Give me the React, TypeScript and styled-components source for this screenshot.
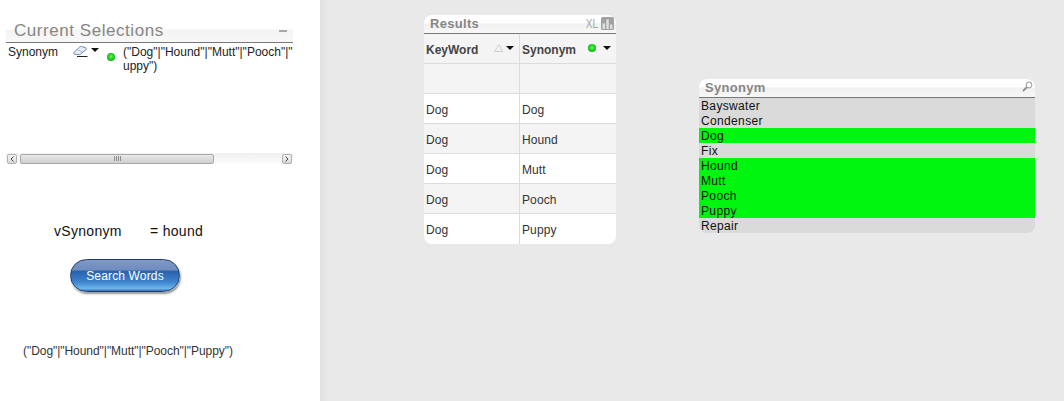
import { Fragment } from 'react';
import styled, { createGlobalStyle } from 'styled-components';

const GlobalStyle = createGlobalStyle`
  html, body {
    margin: 0;
    padding: 0;
    background: #e9e9e9;
  }
  * {
    box-sizing: border-box;
  }
`;

const Page = styled.div`
  display: flex;
  width: 1064px;
  height: 401px;
  overflow: hidden;
  font-family: "Liberation Sans", Arial, sans-serif;
  font-size: 12px;
  color: #222;
`;

const Sidebar = styled.aside`
  width: 320px;
  height: 100%;
  flex: none;
  background: #fff;
  padding: 21px 27px 0 6px;
`;

const Canvas = styled.main`
  flex: 1;
  height: 100%;
  position: relative;
  background: linear-gradient(90deg, #e0e0e0 0, #e9e9e9 10px);
`;

/* --- caption shared by every sheet object --- */
const Caption = styled.div<{ $height: number; $radius?: number }>`
  height: ${(p) => p.$height}px;
  display: flex;
  align-items: flex-end;
  justify-content: space-between;
  border-bottom: 1px solid #787878;
  background: linear-gradient(#fff 0, #fff 42%, #f1f1f1 50%, #f7f7f7 100%);
  border-radius: ${(p) => p.$radius ?? 0}px ${(p) => p.$radius ?? 0}px 0 0;
`;

const CaptionTitle = styled.span<{ $size: number; $left: number; $spacing: number }>`
  font-size: ${(p) => p.$size}px;
  line-height: ${(p) => p.$size + 3}px;
  color: #868686;
  margin: 0 0 1px ${(p) => p.$left}px;
  letter-spacing: ${(p) => p.$spacing}px;
  font-weight: ${(p) => (p.$size < 15 ? 700 : 400)};
`;

/* --- current selections --- */
const SelectionsBox = styled.section`
  width: 287px;
`;

const SelectionsCaption = styled(Caption)`
  background: linear-gradient(#fff 0, #fff 40%, #f3f3f3 41%, #f8f8f8 100%);
  padding-right: 6px;
  align-items: flex-start;
`;

const Minimize = styled.span`
  width: 8px;
  height: 2px;
  margin-top: 9px;
  background: #a8a8a8;
`;

const SelectionRow = styled.div`
  display: flex;
  height: 110px;
  padding: 2px 0 0 2px;
  line-height: 14px;
  color: #222;
`;

const FieldName = styled.span`
  width: 65px;
  flex: none;
`;

const EraserCell = styled.span`
  width: 34px;
  flex: none;
  display: flex;
  gap: 3px;
  align-items: flex-start;
  padding-top: 1px;
`;

const Arrow = styled.svg<{ $drop?: number }>`
  flex: none;
  display: block;
  margin-top: ${(p) => p.$drop ?? 0}px;
`;

const Dot = styled.span<{ $size: number }>`
  display: block;
  flex: none;
  width: ${(p) => p.$size}px;
  height: ${(p) => p.$size}px;
  border-radius: 50%;
  background: radial-gradient(circle at 50% 45%, #6cf56c 0, #16cc16 50%, #0a8f0a 100%);
`;

const DotCell = styled.span`
  width: 16px;
  flex: none;
  padding-top: 8px;
`;

const SelectionValue = styled.span`
  width: 170px;
  white-space: nowrap;
`;

const ScrollTrack = styled.div`
  height: 11px;
  display: flex;
  align-items: center;
  padding: 0 1px;
  background: linear-gradient(#f0f0f0, #fcfcfc);
`;

const ScrollButton = styled.span`
  width: 10px;
  height: 10px;
  flex: none;
  border: 1px solid #b0b0b0;
  border-radius: 2px;
  background: linear-gradient(#f5f5f5, #d8d8d8);
  display: flex;
  align-items: center;
  justify-content: center;
`;

const ScrollThumb = styled.span`
  width: 195px;
  height: 10px;
  margin: 0 68px 0 3px;
  border: 1px solid #a9a9a9;
  border-radius: 2px;
  background: linear-gradient(#e8e8e8, #cfcfcf);
  display: flex;
  align-items: center;
  justify-content: center;
`;

const Grip = styled.span`
  width: 7px;
  height: 5px;
  background: repeating-linear-gradient(90deg, #8c8c8c 0, #8c8c8c 1px, transparent 1px, transparent 2px);
`;

/* --- variable + button + text object --- */
const VariableRow = styled.div`
  display: flex;
  margin: 59px 0 0 48px;
  font-size: 14px;
  line-height: 16px;
  letter-spacing: 0.3px;
  color: #111;
`;

const VariableName = styled.span`
  width: 96px;
`;

const SearchButton = styled.button`
  display: block;
  width: 110px;
  height: 33px;
  margin: 20px 0 0 64px;
  padding: 0;
  border: 1px solid #1e3f73;
  border-radius: 17px;
  color: #fff;
  font: 12px "Liberation Sans", Arial, sans-serif;
  letter-spacing: 0.15px;
  background: linear-gradient(#7f98c6 0, #6f8cc0 32%, #2a62ab 36%, #3d82cc 70%, #6cb5ec 92%, #3c6ea8 100%);
  box-shadow: 1px 2px 2px rgba(0, 0, 0, 0.4);
`;

const ResultText = styled.p`
  margin: 52px 0 0 17px;
  line-height: 14px;
  letter-spacing: -0.05px;
  color: #333;
  white-space: nowrap;
`;

/* --- sheet objects on the canvas --- */
const SheetObject = styled.section<{ $left: number; $top: number; $width: number }>`
  position: absolute;
  left: ${(p) => p.$left}px;
  top: ${(p) => p.$top}px;
  width: ${(p) => p.$width}px;
  border-radius: 8px;
  overflow: hidden;
`;

const CaptionTools = styled.span<{ $lift: number }>`
  display: flex;
  align-items: center;
  gap: 2px;
  margin-bottom: ${(p) => p.$lift}px;
  padding-right: 2px;
`;

const XlLabel = styled.span`
  font-size: 13px;
  line-height: 12px;
  color: #a6a6a6;
  margin-right: -1px;
  transform: scaleX(0.78);
`;

/* --- results table --- */
const TableGrid = styled.div`
  display: grid;
  grid-template-columns: 96px 96px;
  grid-auto-rows: 30px;
  color: #333;
`;

const Cell = styled.div<{ $shade?: boolean; $last?: boolean; $right?: boolean }>`
  display: flex;
  align-items: center;
  padding: 2px 0 0 2px;
  background: ${(p) => (p.$shade ? '#f4f4f4' : '#fff')};
  border-bottom: ${(p) => (p.$last ? 'none' : '1px solid #dcdcdc')};
  border-right: ${(p) => (p.$right ? 'none' : '1px solid #dcdcdc')};
  letter-spacing: 0.1px;
`;

const HeaderCell = styled(Cell)`
  font-weight: 700;
  color: #444;
  letter-spacing: 0;
  justify-content: space-between;
  padding-right: 5px;
`;

const HeaderIcons = styled.span<{ $gap: number }>`
  display: flex;
  align-items: center;
  gap: ${(p) => p.$gap}px;
  margin-top: -3px;
`;

/* --- list box --- */
const ListRow = styled.div<{ $selected?: boolean }>`
  height: 15px;
  line-height: 17px;
  padding-left: 2px;
  color: #111;
  letter-spacing: 0.35px;
  background: ${(p) => (p.$selected ? '#00f50f' : '#dadada')};
`;

const keywords = ['Dog', 'Hound', 'Mutt', 'Pooch', 'Puppy'];

const listValues = [
  { label: 'Bayswater', selected: false },
  { label: 'Condenser', selected: false },
  { label: 'Dog', selected: true },
  { label: 'Fix', selected: false },
  { label: 'Hound', selected: true },
  { label: 'Mutt', selected: true },
  { label: 'Pooch', selected: true },
  { label: 'Puppy', selected: true },
  { label: 'Repair', selected: false },
];

const DownArrow = ({ drop }: { drop?: number }) => (
  <Arrow $drop={drop} width="8" height="4" viewBox="0 0 8 4">
    <path d="M0 0h8L4 4z" fill="#111" />
  </Arrow>
);

const Eraser = () => (
  <svg width="15" height="11" viewBox="0 0 15 11">
    <path d="M.8 6.500 6.500 1.200C7.300.4 8.300.3 9.200.7l3.300 1.100c1 .4 1.200 1.300.4 2L7.200 8.300c-.7.5-1.300.6-2 .3L1.300 8C.5 7.800.3 7 .8 6.500z" fill="#e8eef7" stroke="#6f88ad" strokeWidth="1" />
    <path d="M3.800 3.500 9.500 6" stroke="#9fb2cd" strokeWidth="0.9" />
    <path d="M4 10.500h10.500" stroke="#222" strokeWidth="1" />
  </svg>
);

const ChartIcon = () => (
  <svg width="13" height="13" viewBox="0 0 13 13">
    <rect width="13" height="13" rx="1.500" fill="#a2a2a2" />
    <path d="M1.500 6.500h2.500V12H1.500zM5.300 2.500h2.500V12H5.300zM9 7.500h2.500V12H9z" fill="#dedede" />
  </svg>
);

const SearchIcon = () => (
  <svg width="11" height="11" viewBox="0 0 11 11">
    <circle cx="7" cy="4" r="2.800" fill="none" stroke="#a8a8a8" strokeWidth="1.200" />
    <path d="M5 6 1 10" stroke="#909090" strokeWidth="1.800" />
  </svg>
);

const App = () => {
  return (
    <Page>
      <GlobalStyle />
      <Sidebar>
        <SelectionsBox>
          <SelectionsCaption $height={22}>
            <CaptionTitle $size={17} $left={8} $spacing={0.55}>Current Selections</CaptionTitle>
            <Minimize />
          </SelectionsCaption>
          <SelectionRow>
            <FieldName>Synonym</FieldName>
            <EraserCell>
              <Eraser />
              <DownArrow drop={2} />
            </EraserCell>
            <DotCell>
              <Dot $size={8} />
            </DotCell>
            <SelectionValue>
              ("Dog"|"Hound"|"Mutt"|"Pooch"|"
              <br />
              uppy")
            </SelectionValue>
          </SelectionRow>
          <ScrollTrack>
            <ScrollButton>
              <svg width="4" height="6" viewBox="0 0 4 6">
                <path d="M3.500.5 1 3l2.500 2.500" fill="none" stroke="#444" />
              </svg>
            </ScrollButton>
            <ScrollThumb>
              <Grip />
            </ScrollThumb>
            <ScrollButton>
              <svg width="4" height="6" viewBox="0 0 4 6">
                <path d="M.5.500 3 3 .5 5.500" fill="none" stroke="#444" />
              </svg>
            </ScrollButton>
          </ScrollTrack>
        </SelectionsBox>
        <VariableRow>
          <VariableName>vSynonym</VariableName>
          <span>= hound</span>
        </VariableRow>
        <SearchButton type="button">Search Words</SearchButton>
        <ResultText>("Dog"|"Hound"|"Mutt"|"Pooch"|"Puppy")</ResultText>
      </Sidebar>
      <Canvas>
        <SheetObject $left={104} $top={15} $width={192}>
          <Caption $height={19} $radius={8}>
            <CaptionTitle $size={13} $left={6} $spacing={0.3}>Results</CaptionTitle>
            <CaptionTools $lift={3}>
              <XlLabel>XL</XlLabel>
              <ChartIcon />
            </CaptionTools>
          </Caption>
          <TableGrid>
            <HeaderCell $shade>
              KeyWord
              <HeaderIcons $gap={3}>
                <svg width="9" height="8" viewBox="0 0 9 8">
                  <path d="M.5 7.500h8L5 .5z" fill="#f4f4f4" stroke="#cfcfcf" />
                </svg>
                <DownArrow />
              </HeaderIcons>
            </HeaderCell>
            <HeaderCell $shade $right>
              Synonym
              <HeaderIcons $gap={7}>
                <Dot $size={8} />
                <DownArrow />
              </HeaderIcons>
            </HeaderCell>
            <Cell $shade />
            <Cell $shade $right />
            {keywords.map((word, i) => (
              <Fragment key={word}>
                <Cell $shade={i % 2 === 1} $last={i === keywords.length - 1}>Dog</Cell>
                <Cell $shade={i % 2 === 1} $last={i === keywords.length - 1} $right>{word}</Cell>
              </Fragment>
            ))}
          </TableGrid>
        </SheetObject>
        <SheetObject $left={379} $top={79} $width={336}>
          <Caption $height={19} $radius={8}>
            <CaptionTitle $size={13} $left={6} $spacing={0.3}>Synonym</CaptionTitle>
            <CaptionTools $lift={5}>
              <SearchIcon />
            </CaptionTools>
          </Caption>
          {listValues.map((item) => (
            <ListRow key={item.label} $selected={item.selected}>{item.label}</ListRow>
          ))}
        </SheetObject>
      </Canvas>
    </Page>
  );
};

export default App;
